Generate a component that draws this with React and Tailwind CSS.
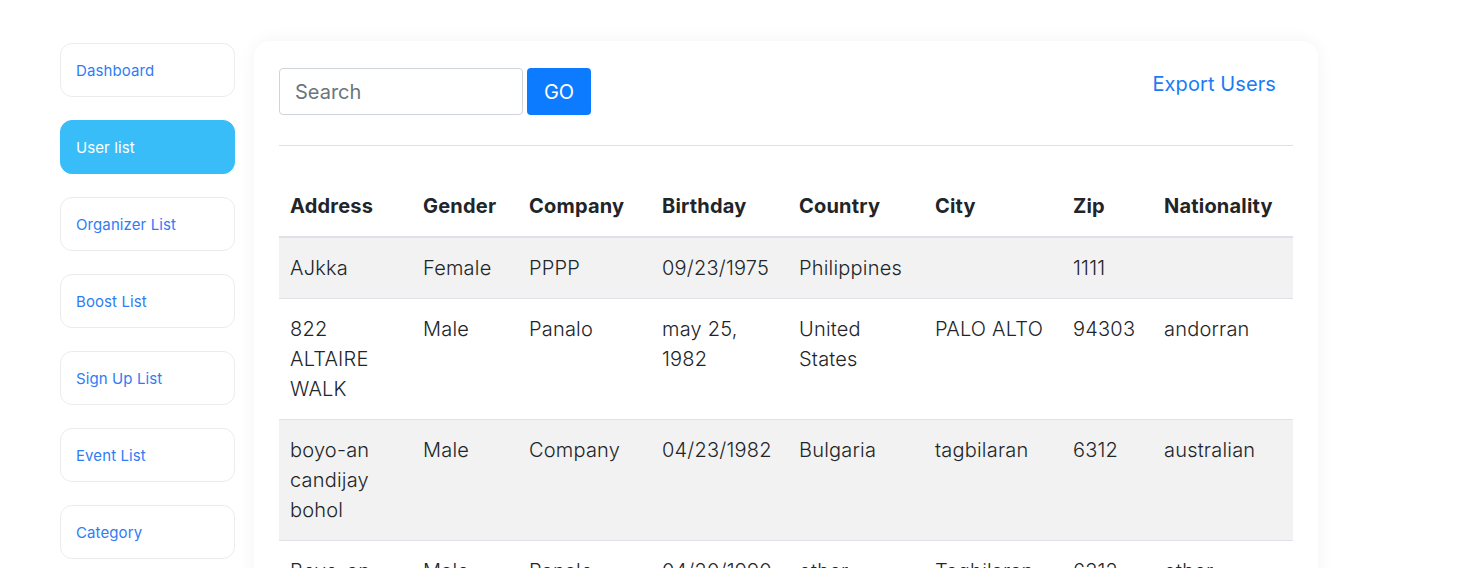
import React from "react";

const navItems = [
  "Dashboard",
  "User list",
  "Organizer List",
  "Boost List",
  "Sign Up List",
  "Event List",
  "Category",
];

const columns = [
  { label: "Address", w: "w-[133px]" },
  { label: "Gender", w: "w-[106px]" },
  { label: "Company", w: "w-[133px]" },
  { label: "Birthday", w: "w-[137px]" },
  { label: "Country", w: "w-[136px]" },
  { label: "City", w: "w-[138px]" },
  { label: "Zip", w: "w-[91px]" },
  { label: "Nationality", w: "w-[140px]" },
];

const users = [
  ["AJkka", "Female", "PPPP", "09/23/1975", "Philippines", "", "1111", ""],
  ["822 ALTAIRE WALK", "Male", "Panalo", "may 25, 1982", "United States", "PALO ALTO", "94303", "andorran"],
  ["boyo-an candijay bohol", "Male", "Company", "04/23/1982", "Bulgaria", "tagbilaran", "6312", "australian"],
  ["Boyo-an Candijay", "Male", "Panalo", "04/20/1990", "other", "Tagbilaran", "6312", "other"],
];

export default function App() {
  return (
    <div className="min-h-screen bg-white font-['Inter',sans-serif] text-[#212529]">
      <div className="flex items-start gap-[19px] pl-[60px] pt-[43px]">
        <nav className="flex w-[175px] shrink-0 flex-col gap-[23px]">
          {navItems.map((item) => {
            const active = item === "User list";
            return (
              <a
                key={item}
                href="#"
                className={
                  active
                    ? "flex h-[54px] items-center rounded-xl border border-[#38bdf8] bg-[#38bdf8] px-[15px] pt-[2px] text-[15px] tracking-[0.1px] text-white"
                    : "flex h-[54px] items-center rounded-xl border border-[#ececec] bg-white px-[15px] pt-[2px] text-[15px] tracking-[0.1px] text-[#2f7cf6]"
                }
              >
                {item}
              </a>
            );
          })}
        </nav>

        <main className="-mt-[2px] w-[1064px] rounded-2xl bg-white px-[25px] pt-[27px] shadow-[0_0_18px_rgba(0,0,0,0.05)]">
          <div className="flex items-start justify-between">
            <div className="flex gap-1">
              <input
                placeholder="Search"
                className="h-[47px] w-[244px] rounded border border-[#ced4da] px-[15px] text-[20px] placeholder:text-[#6c757d] focus:outline-none"
              />
              <button className="h-[47px] w-[64px] rounded bg-[#0d7bff] text-[20px] text-white">GO</button>
            </div>
            <a href="#" className="mr-[17px] mt-[1px] text-[20px] tracking-[0.1px] text-[#1a7cf5]">
              Export Users
            </a>
          </div>

          <hr className="mt-[30px] border-t border-[#dee2e6]" />

          <table className="mt-[32px] w-full table-fixed border-collapse text-left text-[20px] leading-[30px]">
            <thead>
              <tr className="border-b-2 border-[#dee2e6]">
                {columns.map((c) => (
                  <th key={c.label} className={`${c.w} px-[11px] pb-[15px] pt-[13px] font-bold tracking-[0.2px]`}>
                    {c.label}
                  </th>
                ))}
              </tr>
            </thead>
            <tbody>
              {users.map((row, i) => (
                <tr
                  key={i}
                  className={i % 2 === 0 ? "border-b border-[#dee2e6] bg-[#f2f2f2]" : "border-b border-[#dee2e6] bg-white"}
                >
                  {row.map((cell, j) => (
                    <td key={j} className="px-[11px] py-[15px] align-top font-light tracking-[0.2px]">
                      {cell}
                    </td>
                  ))}
                </tr>
              ))}
            </tbody>
          </table>
        </main>
      </div>
    </div>
  );
}
